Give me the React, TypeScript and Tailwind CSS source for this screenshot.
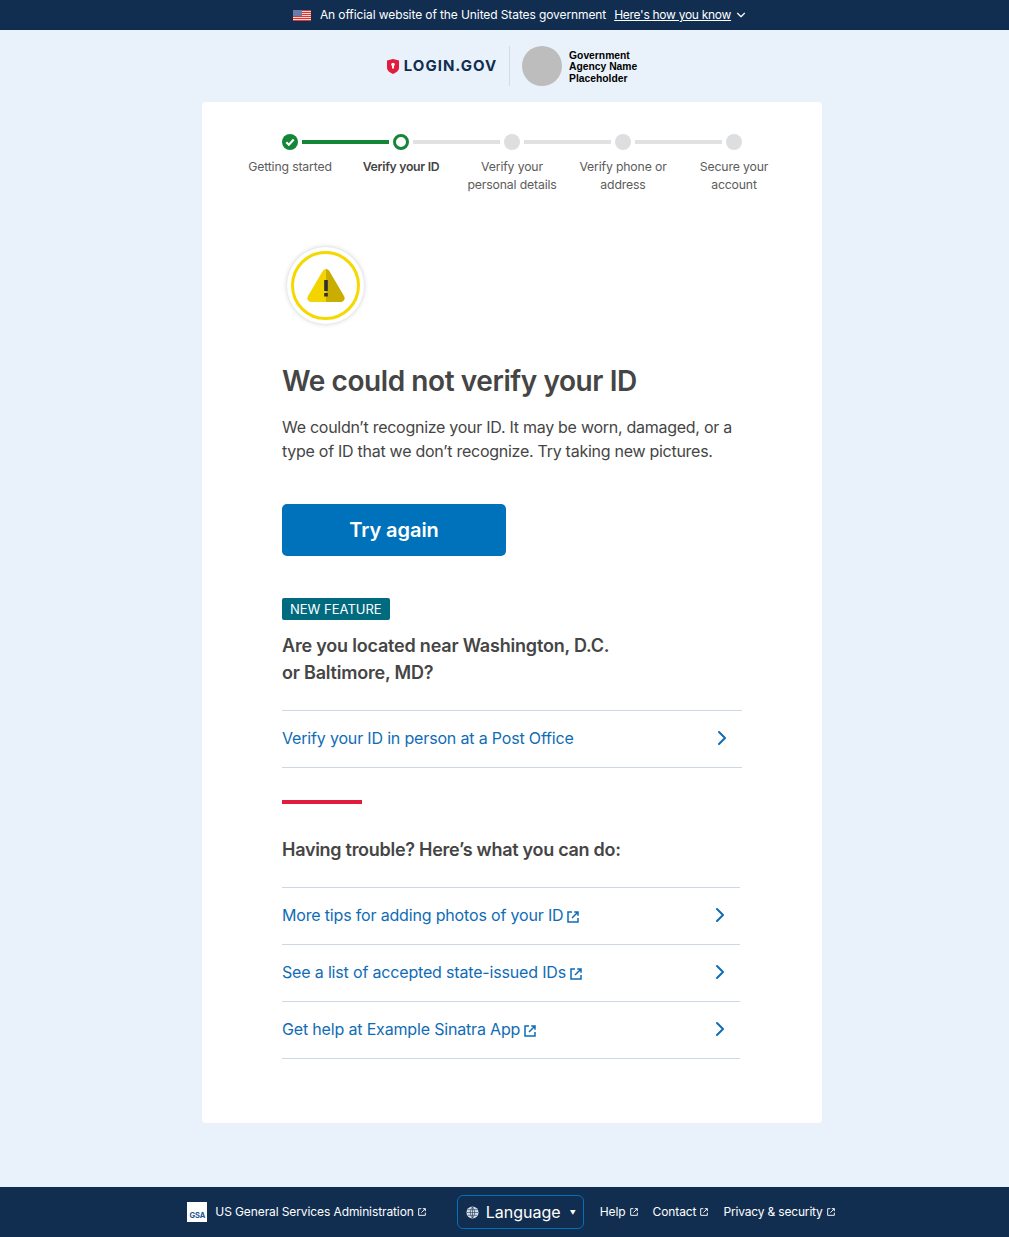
import { ChevronRight, ChevronDown } from "lucide-react";

const steps = [
  { label: "Getting started", state: "done" },
  { label: "Verify your ID", state: "current" },
  { label: "Verify your personal details", state: "todo" },
  { label: "Verify phone or address", state: "todo" },
  { label: "Secure your account", state: "todo" },
];

const helpLinks = [
  "More tips for adding photos of your ID",
  "See a list of accepted state-issued IDs",
  "Get help at Example Sinatra App",
];

function External({ size = 12, stroke = 1.5 }: { size?: number; stroke?: number }) {
  return (
    <svg
      width={size}
      height={size}
      viewBox="0 0 12 12"
      fill="none"
      stroke="currentColor"
      strokeWidth={stroke}
      className="inline-block ml-1 align-[-2px]"
    >
      <path d="M5 1H1v10h10V7" />
      <path d="M5 7l6-6M7.2 1H11v3.8" />
    </svg>
  );
}

function Flag() {
  return (
    <svg width="18" height="11" viewBox="0 0 18 11">
      <rect width="18" height="11" fill="#f4d5d3" />
      {[0, 2, 4, 6, 8, 10].map((y) => (
        <rect key={y} y={y} width="18" height="1" fill="#d83933" />
      ))}
      <rect width="9" height="6" fill="#6b7ca8" />
    </svg>
  );
}

function Shield() {
  return (
    <svg width="12" height="15" viewBox="0 0 12 15">
      <path d="M0 1.5 6 0l6 1.5V9c0 2.6-2.6 4.6-6 6-3.4-1.4-6-3.4-6-6Z" fill="#e21c3d" />
      <circle cx="6" cy="5.5" r="1.8" fill="#fff" />
      <rect x="5" y="5.5" width="2" height="4" fill="#fff" />
    </svg>
  );
}

function StepDot({ state }: { state: string }) {
  if (state === "done") {
    return (
      <svg width="16" height="16" viewBox="0 0 16 16" className="shrink-0">
        <circle cx="8" cy="8" r="8" fill="#158538" />
        <path d="m4.3 8.3 2.6 2.5 4.8-5.2" fill="none" stroke="#fff" strokeWidth="2.2" />
      </svg>
    );
  }
  if (state === "current") {
    return <div className="w-4 h-4 shrink-0 rounded-full border-[3px] border-[#158538] bg-white" />;
  }
  return <div className="w-4 h-4 shrink-0 rounded-full bg-[#dcdee0]" />;
}

function StepIndicator() {
  return (
    <div className="grid grid-cols-5 w-[555px] mx-auto">
      {steps.map((step, i) => (
        <div key={step.label} className="flex flex-col items-center">
          <div className="flex items-center gap-1 w-full h-4">
            <div className={`flex-1 h-1 ${i === 0 ? "" : i === 1 ? "bg-[#158538]" : "bg-[#dfe1e2]"}`} />
            <StepDot state={step.state} />
            <div className={`flex-1 h-1 ${i === 4 ? "" : i === 0 ? "bg-[#158538]" : "bg-[#dfe1e2]"}`} />
          </div>
          <div
            className={`mt-[8px] w-[100px] text-center text-[12.25px] leading-[18px] ${
              step.state === "current" ? "font-semibold text-[#454545] tracking-[-0.3px]" : "text-[#5c5c5c] tracking-[-0.15px]"
            } ${i === 0 || i === 1 ? "whitespace-nowrap flex justify-center" : ""}`}
          >
            {step.label}
          </div>
        </div>
      ))}
    </div>
  );
}

function WarningBadge() {
  return (
    <div className="w-[77px] h-[77px] rounded-full bg-white shadow-[0_0_5px_rgba(0,0,0,0.2)] flex items-center justify-center">
      <div className="w-[69px] h-[69px] rounded-full border-[3px] border-[#f5d800] flex items-center justify-center">
        <svg width="38" height="34" viewBox="0 0 38 34">
          <path d="M19 0c-1.6 0-2.7.9-3.6 2.4L1 27c-1.6 3 0 6 3.4 6H19Z" fill="#f2d500" />
          <path d="M19 0c1.6 0 2.7.9 3.6 2.4L37 27c1.6 3 0 6-3.4 6H19Z" fill="#c9ad00" />
          <rect x="17.2" y="11" width="3.6" height="11" fill="#2f2f2f" />
          <rect x="17.2" y="24" width="3.6" height="3.5" fill="#2f2f2f" />
        </svg>
      </div>
    </div>
  );
}

function LinkRow({ children }: { children: React.ReactNode }) {
  return (
    <a className="flex items-center justify-between h-[57px] pb-[2px] border-b border-[#cdd7e6] text-[#0f6cb6] text-[16px] tracking-[-0.17px]">
      <span>{children}</span>
      <ChevronRight size={24} strokeWidth={2} className="mr-[8px]" />
    </a>
  );
}

export default function App() {
  return (
    <div className="overflow-hidden">
      <div className="w-[1024px] min-h-[1237px] flex flex-col bg-[#e9f2fa] text-[#454545] font-['Inter','Liberation_Sans',sans-serif]">
        {/* Gov banner */}
        <div className="h-[30px] pl-[17px] bg-[#112e51] flex items-center justify-center text-white text-[12px]">
          <Flag />
          <span className="ml-[9px] tracking-[-0.1px]">An official website of the United States government</span>
          <span className="ml-2 underline tracking-[-0.28px]">Here's how you know</span>
          <ChevronDown size={14} strokeWidth={2} className="ml-[3px]" />
        </div>

        {/* Logos */}
        <div className="h-[72px] flex items-center justify-center">
          <Shield />
          <span className="ml-[5px] text-[#112e51] font-bold text-[15px] tracking-[1px]">LOGIN.GOV</span>
          <div className="w-px h-10 bg-[#cfdbe8] mx-[12px]" />
          <div className="w-10 h-10 rounded-full bg-[#bdbdbd]" />
          <div className="ml-[7px] mt-[2px] text-black text-[10.3px] leading-[11.5px] font-bold font-['Liberation_Sans',sans-serif]">
            Government
            <br />
            Agency Name
            <br />
            Placeholder
          </div>
        </div>

        {/* Card */}
        <main className="w-[620px] h-[1021px] mx-auto bg-white rounded-[4px] pt-8">
          <StepIndicator />
          <div className="px-20">
            <div className="mt-[53px] ml-[5px]">
              <WarningBadge />
            </div>
            <h1 className="mt-[39px] text-[28px] leading-[36px] font-semibold tracking-[-0.42px]">
              We could not verify your ID
            </h1>
            <p className="mt-[16px] text-[16px] leading-[24px] w-[460px] tracking-[-0.27px]">
              We couldn’t recognize your ID. It may be worn, damaged, or a type of ID that we don’t recognize. Try taking new pictures.
            </p>
            <button className="mt-[41px] w-[224px] h-[52px] rounded-[5px] bg-[#0071bb] text-white text-[20px] font-semibold tracking-[-0.05px]">
              Try again
            </button>
            <div className="mt-[42px] w-fit h-[22px] px-2 rounded-[2px] bg-[#006a7f] text-white text-[13px] leading-[22px]">
              NEW FEATURE
            </div>
            <h2 className="mt-[12px] text-[18px] leading-[27px] font-semibold w-[340px] tracking-[-0.2px]">
              Are you located near Washington, D.C. or Baltimore, MD?
            </h2>
            <div className="mt-[24px] border-t border-[#cdd7e6]">
              <LinkRow>Verify your ID in person at a Post Office</LinkRow>
            </div>
            <div className="mt-8 w-20 h-1 bg-[#e21c3d]" />
            <h2 className="mt-[32px] text-[18px] leading-[27px] font-semibold tracking-[-0.28px]">
              Having trouble? Here’s what you can do:
            </h2>
            <div className="mt-[24px] w-[458px] border-t border-[#cdd7e6]">
              {helpLinks.map((text) => (
                <LinkRow key={text}>
                  {text}
                  <External />
                </LinkRow>
              ))}
            </div>
          </div>
        </main>

        {/* Footer */}
        <footer className="mt-auto h-[50px] pr-[2px] bg-[#112e51] flex items-center justify-center text-white text-[12px] tracking-[-0.1px]">
          <div className="w-[20px] h-[20px] bg-white flex items-end justify-center text-[#205493] text-[7.5px] font-bold leading-[13px]">
            GSA
          </div>
          <span className="ml-2">US General Services Administration</span>
          <External size={8} stroke={1.4} />
          <div className="ml-[31px] w-[127px] h-[34px] border border-[#0071bb] rounded-[6px] flex items-center pl-[8px]">
            <svg width="13" height="13" viewBox="0 0 14 14">
              <circle cx="7" cy="7" r="6.5" fill="#d5dde6" />
              <path d="M1 7h12M7 1v12M2 4h10M2 10h10M7 1c-3 3-3 9 0 12M7 1c3 3 3 9 0 12" fill="none" stroke="#112e51" strokeWidth="0.6" />
            </svg>
            <span className="ml-[7px] text-[16px] tracking-normal">Language</span>
            <span className="ml-[9px] text-[6px]">▼</span>
          </div>
          <span className="ml-[16px]">Help</span>
          <External size={8} stroke={1.4} />
          <span className="ml-[15px]">Contact</span>
          <External size={8} stroke={1.4} />
          <span className="ml-[15px] tracking-[-0.17px]">Privacy &amp; security</span>
          <External size={8} stroke={1.4} />
        </footer>
      </div>
    </div>
  );
}
